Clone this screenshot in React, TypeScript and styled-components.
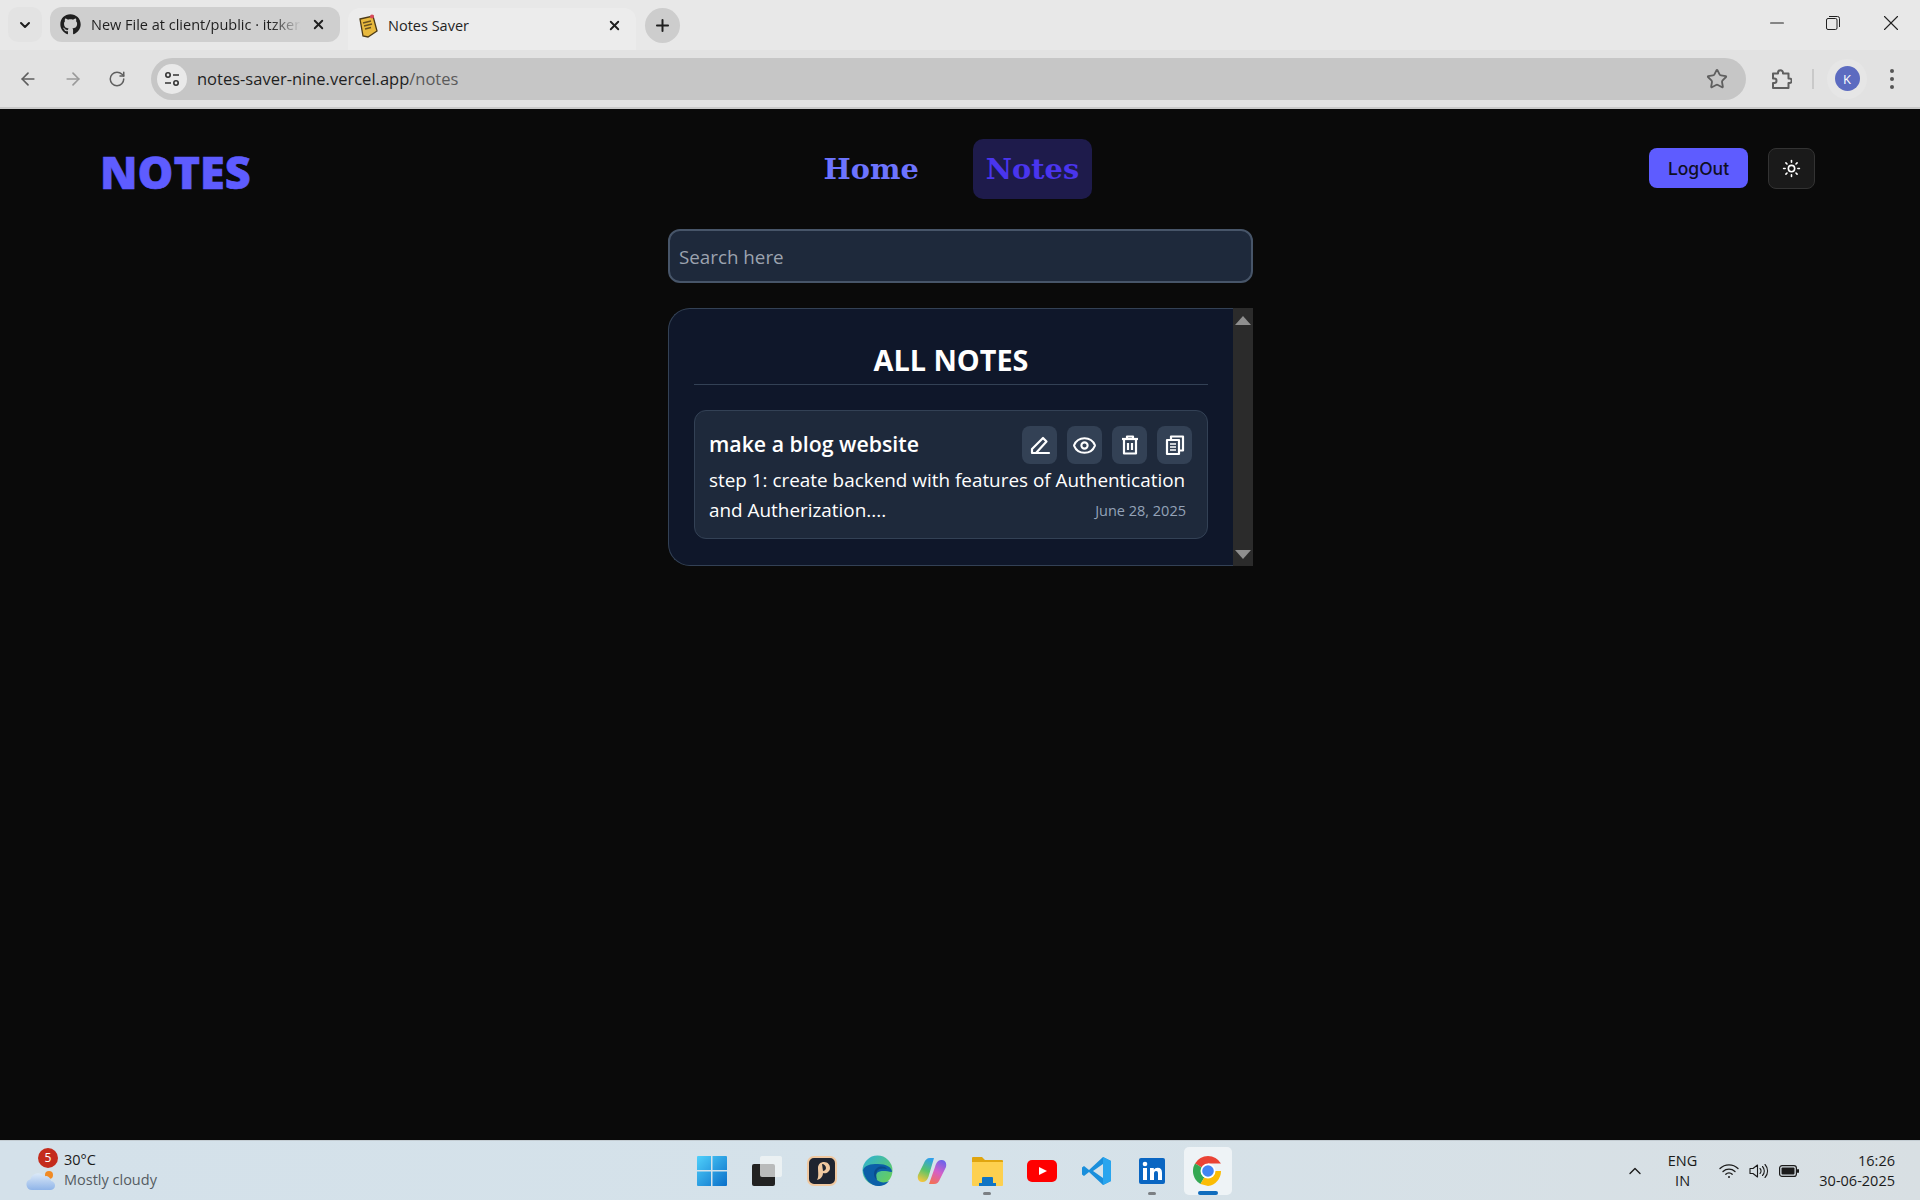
import React from "react";
import styled, { createGlobalStyle } from "styled-components";
import { FaGithub } from "react-icons/fa";
import { ArrowLeft, ArrowRight, ChevronDown, ChevronUp, Eye, Minus, Plus, RotateCw, Star, Sun, X } from "lucide-react";

const GlobalStyle = createGlobalStyle`
  html, body { margin: 0; padding: 0; background: #0a0a0a; }
  * { box-sizing: border-box; }
  body { font-family: "Open Sans", "Noto Sans", sans-serif; }
`;

const Screen = styled.div`
  width: 1920px;
  height: 1200px;
  display: flex;
  flex-direction: column;
  overflow: hidden;
`;

/* browser chrome */
const TabStrip = styled.div`
  height: 50px;
  background: #e8e8e8;
  display: flex;
  align-items: flex-start;
  padding: 7px 0 0 8px;
  color: #1f1f1f;
`;

const ListButton = styled.div`
  width: 34px;
  height: 35px;
  border-radius: 10px;
  background: #e3e3e3;
  display: flex;
  align-items: center;
  justify-content: center;
  margin-right: 8px;
`;

const Tab = styled.div<{ $active?: boolean }>`
  width: ${({ $active }) => ($active ? "288px" : "290px")};
  height: ${({ $active }) => ($active ? "43px" : "35px")};
  margin-top: ${({ $active }) => ($active ? "1px" : "0")};
  margin-right: ${({ $active }) => ($active ? "9px" : "8px")};
  background: ${({ $active }) => ($active ? "#ececec" : "#cfcfcf")};
  border-radius: ${({ $active }) => ($active ? "12px 12px 0 0" : "12px")};
  display: flex;
  align-items: center;
  padding: ${({ $active }) => ($active ? "0 14px 8px 10px" : "0 14px 0 10px")};
  gap: 10px;
`;

const TabTitle = styled.span<{ $fade?: boolean }>`
  flex: 1;
  font-size: 14.5px;
  white-space: nowrap;
  overflow: hidden;
  mask-image: ${({ $fade }) => ($fade ? "linear-gradient(90deg, #000 86%, transparent 100%)" : "none")};
`;

const NewTab = styled.div`
  width: 35px;
  height: 35px;
  border-radius: 50%;
  background: #cdcdcd;
  margin-top: 1px;
  display: flex;
  align-items: center;
  justify-content: center;
`;

const WindowControls = styled.div`
  margin-left: auto;
  display: flex;
  align-items: center;
  height: 32px;
  color: #222;
  padding-right: 16px;
  gap: 38px;
`;

const Toolbar = styled.div`
  height: 59px;
  background: #e2e2e2;
  border-bottom: 2px solid #c9c9c9;
  display: flex;
  align-items: center;
  padding: 0 0 0 18px;
  color: #5f5f5f;
`;

const NavIcons = styled.div`
  display: flex;
  align-items: center;
  gap: 25px;
  margin-right: 25px;
`;

const AddressBar = styled.div`
  width: 1595px;
  height: 42px;
  border-radius: 21px;
  background: #c6c6c6;
  display: flex;
  align-items: center;
  padding: 0 18px 0 6px;
`;

const SiteInfo = styled.div`
  width: 30px;
  height: 30px;
  border-radius: 50%;
  background: #e9e9e9;
  display: flex;
  align-items: center;
  justify-content: center;
  margin-right: 10px;
  color: #333;
`;

const Url = styled.span`
  flex: 1;
  font-size: 16.5px;
  color: #1f1f1f;
`;

const UrlPath = styled.span`
  color: #5a5a5a;
`;

const ToolbarEnd = styled.div`
  flex: 1;
  display: flex;
  align-items: center;
  padding-left: 24px;
`;

const ToolbarDivider = styled.div`
  width: 2px;
  height: 20px;
  background: #c9c9c9;
  margin: 0 13px 0 20px;
`;

const AvatarHalo = styled.div`
  width: 40px;
  height: 40px;
  border-radius: 50%;
  background: #e6e6e6;
  display: flex;
  align-items: center;
  justify-content: center;
  margin-right: 23px;
`;

const Avatar = styled.div`
  width: 25px;
  height: 25px;
  border-radius: 50%;
  background: #5c6bc0;
  color: #fff;
  font-size: 13px;
  display: flex;
  align-items: center;
  justify-content: center;
`;

const Dots = styled.div`
  display: flex;
  flex-direction: column;
  gap: 4px;
`;

const Dot = styled.span`
  width: 4px;
  height: 4px;
  border-radius: 50%;
  background: #555;
`;

/* page */
const Page = styled.main`
  flex: 1;
  background: #0a0a0a;
  padding-top: 30px;
  display: flex;
  flex-direction: column;
`;

const Navbar = styled.header`
  display: flex;
  justify-content: space-between;
  align-items: center;
  height: 60px;
  padding: 0 105px 0 100px;
`;

const Logo = styled.div`
  font-family: "Open Sans", sans-serif;
  font-weight: 800;
  font-size: 45px;
  line-height: 1;
  color: #5e5cff;
  -webkit-text-stroke: 0.6px #5e5cff;
  margin: 5px 3px 0 0;
`;

const NavLinks = styled.nav`
  display: flex;
  gap: 41px;
`;

const NavLink = styled.a<{ $active?: boolean }>`
  font-family: "DejaVu Serif", serif;
  font-weight: 700;
  font-size: 28.8px;
  line-height: 60px;
  height: 60px;
  padding: 0 13px;
  border-radius: 10px;
  color: ${({ $active }) => ($active ? "#4a35ee" : "#6d74ff")};
  background: ${({ $active }) => ($active ? "#1e1b4b" : "transparent")};
`;

const NavActions = styled.div`
  display: flex;
  align-items: center;
  gap: 20px;
  margin-top: -2px;
`;

const LogoutButton = styled.button`
  width: 99px;
  height: 40px;
  border: none;
  border-radius: 8px;
  background: #5e5cff;
  color: #0f0f1f;
  font-family: "Inter", sans-serif;
  font-weight: 500;
  font-size: 17.5px;
`;

const ThemeButton = styled.button`
  width: 47px;
  height: 41px;
  border: 1px solid #333;
  border-radius: 8px;
  background: #1a1a1a;
  color: #fff;
  display: flex;
  align-items: center;
  justify-content: center;
  padding: 0;
`;

const Column = styled.section`
  width: 585px;
  margin: 30px 0 0 668px;
`;

const SearchInput = styled.input`
  width: 100%;
  height: 54px;
  border: 2px solid #475569;
  border-radius: 12px;
  background: #1e293b;
  padding: 1px 9px 0;
  font-family: inherit;
  font-size: 18.8px;
  outline: none;
  color: #fff;
  &::placeholder { color: #9ca3af; opacity: 1; }
`;

const Panel = styled.div`
  margin-top: 25px;
  height: 258px;
  display: flex;
  background: #0f172a;
  border: 1px solid #334155;
  border-right: none;
  border-radius: 22px 0 0 22px;
`;

const PanelBody = styled.div`
  flex: 1;
  padding: 25px 25px 0 25px;
`;

const Heading = styled.h2`
  margin: 0;
  height: 51px;
  border-bottom: 1px solid #334155;
  text-align: center;
  font-size: 28.8px;
  font-weight: 700;
  line-height: 52px;
  color: #fff;
`;

const NoteCard = styled.article`
  margin-top: 25px;
  height: 129px;
  background: #1e293b;
  border: 1px solid #334155;
  border-radius: 12px;
  padding: 15px 15px 0 14px;
`;

const NoteHead = styled.div`
  display: flex;
  justify-content: space-between;
  align-items: center;
  height: 38px;
  margin-bottom: 1px;
`;

const NoteTitle = styled.h3`
  margin: -3px 0 0;
  font-size: 21.3px;
  font-weight: 600;
  color: #fff;
`;

const NoteActions = styled.div`
  display: flex;
  gap: 10px;
`;

const ActionButton = styled.button`
  width: 35px;
  height: 38px;
  border: none;
  border-radius: 8px;
  background: #334155;
  color: #fff;
  display: flex;
  align-items: center;
  justify-content: center;
  padding: 0;
`;

const NoteBody = styled.p`
  margin: 0;
  font-size: 18.9px;
  line-height: 30px;
  color: #fff;
  white-space: nowrap;
`;

const NoteFoot = styled.div`
  display: flex;
  justify-content: space-between;
  align-items: center;
  padding-right: 6px;
`;

const NoteDate = styled.span`
  font-size: 14.5px;
  color: #94a3b8;
`;

const ScrollTrack = styled.div`
  width: 20px;
  margin: -1px 0;
  background: #2b2b2b;
  display: flex;
  flex-direction: column;
  justify-content: space-between;
  align-items: center;
  padding: 8px 0 7px;
`;

const ScrollArrow = styled.div<{ $down?: boolean }>`
  width: 0;
  height: 0;
  border-left: 8px solid transparent;
  border-right: 8px solid transparent;
  border-bottom: ${({ $down }) => ($down ? "0" : "9px solid #8f8f8f")};
  border-top: ${({ $down }) => ($down ? "9px solid #8f8f8f" : "0")};
`;

/* taskbar */
const Taskbar = styled.footer`
  height: 60px;
  background: linear-gradient(90deg, #d4e1ea 0%, #d5e2ea 50%, #d8dfe3 100%);
  border-top: 1px solid #c3ccd2;
  display: grid;
  grid-template-columns: 1fr auto 1fr;
  align-items: center;
  color: #1b1b1b;
`;

const Weather = styled.div`
  display: flex;
  align-items: center;
  padding-left: 25px;
  gap: 9px;
`;

const WeatherIcon = styled.div`
  position: relative;
  width: 30px;
  height: 40px;
  display: flex;
  align-items: flex-end;
`;

const Badge = styled.span`
  position: absolute;
  left: 13px;
  top: -3px;
  width: 20px;
  height: 20px;
  border-radius: 50%;
  background: #c42b1c;
  color: #fff;
  font-size: 12px;
  display: flex;
  align-items: center;
  justify-content: center;
`;

const WeatherText = styled.div`
  font-size: 14.5px;
  line-height: 20px;
  margin-top: -2px;
`;

const MutedLine = styled.div`
  color: #555c62;
`;

const TaskIcons = styled.div`
  display: flex;
  align-items: center;
  margin-left: -4px;
`;

const TaskItem = styled.div<{ $active?: boolean }>`
  position: relative;
  width: ${({ $active }) => ($active ? "48px" : "55px")};
  height: 48px;
  margin-left: ${({ $active }) => ($active ? "4px" : "0")};
  border-radius: 5px;
  background: ${({ $active }) => ($active ? "#eef3f6" : "transparent")};
  display: flex;
  align-items: center;
  justify-content: center;
`;

const RunDot = styled.span<{ $active?: boolean }>`
  position: absolute;
  bottom: 0;
  left: 50%;
  transform: translateX(-50%);
  width: ${({ $active }) => ($active ? "20px" : "8px")};
  height: ${({ $active }) => ($active ? "4px" : "3px")};
  border-radius: 2px;
  background: ${({ $active }) => ($active ? "#0f6cbd" : "#7b7f83")};
`;

const Tray = styled.div`
  display: flex;
  align-items: center;
  justify-content: flex-end;
  padding-right: 25px;
`;

const LangBlock = styled.div`
  font-size: 14.5px;
  line-height: 20px;
  text-align: center;
  margin: 0 22px 0 23px;
`;

const TrayIcons = styled.div`
  display: flex;
  align-items: center;
  gap: 10px;
  margin-right: 20px;
`;

const Clock = styled.div`
  font-size: 14.5px;
  line-height: 20px;
  text-align: right;
`;

const PenIcon = () => (
  <svg width="22" height="22" viewBox="0 0 22 22" fill="none" stroke="currentColor" strokeWidth="2.2" strokeLinejoin="round" strokeLinecap="round">
    <path d="M3 19v-4L14 4l3.500 3.500L7 19z" />
    <path d="M7 19h13" />
  </svg>
);

const TrashIcon = () => (
  <svg width="22" height="22" viewBox="0 0 22 22" fill="none" stroke="currentColor" strokeWidth="2.2" strokeLinejoin="round">
    <path d="M3 5h16" />
    <path d="M8 5V2.500h6V5" />
    <path d="M5 5v14.500h12V5" />
    <path d="M9 9v7M13 9v7" />
  </svg>
);

const CopyNotesIcon = () => (
  <svg width="22" height="22" viewBox="0 0 22 22" fill="none" stroke="currentColor" strokeWidth="2.2" strokeLinejoin="round">
    <path d="M7 6V2.500h12v14h-4" />
    <path d="M3 6h12v14H3z" />
    <path d="M6 10h6M6 13h6M6 16h6" strokeWidth="1.6" />
  </svg>
);

const SiteInfoIcon = () => (
  <svg width="18" height="18" viewBox="0 0 18 18" fill="none" stroke="currentColor" strokeWidth="1.6">
    <circle cx="5" cy="5" r="2.200" />
    <path d="M10 5h6M2 13h6" />
    <circle cx="13" cy="13" r="2.200" />
  </svg>
);

const RestoreIcon = () => (
  <svg width="14" height="14" viewBox="0 0 14 14" fill="none" stroke="currentColor" strokeWidth="1">
    <rect x="0.500" y="2.500" width="10.500" height="11" rx="1.500" />
    <path d="M3 .5h8.500a2 2 0 0 1 2 2V11" />
  </svg>
);

const ExtensionIcon = () => (
  <svg width="22" height="22" viewBox="0 0 22 22" fill="none" stroke="currentColor" strokeWidth="2" strokeLinejoin="round">
    <path d="M3 5.500h5v-.8a2.500 2.500 0 0 1 5 0v.8h5.500v5h1a2.200 2.200 0 0 1 0 4.400h-1V20H3v-5h1.200a2.300 2.300 0 0 0 0-4.600H3z" />
  </svg>
);

const NotesFavicon = () => (
  <svg width="20" height="24" viewBox="0 0 20 24">
    <path d="M2 5l13-3 4 15-9 6-5-1z" fill="#e8b93d" stroke="#4c3a17" strokeWidth="1.300" />
    <path d="M5 9l8-2M6 12l8-2M7 15l6-1.500" stroke="#6b5320" strokeWidth="1.500" />
    <circle cx="14" cy="2.500" r="2" fill="#d84a5b" />
  </svg>
);

const CloudIcon = () => (
  <svg width="30" height="22" viewBox="0 0 30 22">
    <defs>
      <linearGradient id="cloudFill" x1="0" y1="0" x2="0" y2="1">
        <stop offset="0" stopColor="#dbe9f8" />
        <stop offset="1" stopColor="#8fb4e8" />
      </linearGradient>
    </defs>
    <circle cx="24" cy="6" r="4" fill="#f08a24" />
    <path d="M7 21a5.500 5.500 0 0 1-1.500-10.800A7.500 7.500 0 0 1 19 7.500 5 5 0 0 1 26 12a4.500 4.500 0 0 1-1 9z" fill="url(#cloudFill)" />
  </svg>
);

const StartIcon = () => (
  <svg width="30" height="30" viewBox="0 0 30 30">
    <defs>
      <linearGradient id="startFill" x1="0" y1="0" x2="1" y2="1">
        <stop offset="0" stopColor="#4fd0fb" />
        <stop offset="1" stopColor="#0a6fc9" />
      </linearGradient>
    </defs>
    <path d="M0 1a1 1 0 0 1 1-1h13v14H0zM15.500 0H29a1 1 0 0 1 1 1v13H15.500zM0 15.500h14V30H1a1 1 0 0 1-1-1zM15.500 15.500H30V29a1 1 0 0 1-1 1H15.500z" fill="url(#startFill)" />
  </svg>
);

const TaskViewIcon = () => (
  <svg width="30" height="30" viewBox="0 0 30 30">
    <rect x="0" y="8" width="23" height="22" rx="2" fill="#222" />
    <rect x="8" y="0" width="22" height="21" rx="2" fill="#f4f6f7" fillOpacity="0.72" />
  </svg>
);

const NotesAppIcon = () => (
  <svg width="30" height="30" viewBox="0 0 30 30">
    <rect x="1" y="1" width="28" height="28" rx="6" fill="#1f2430" stroke="#f0c8a0" strokeWidth="2" />
    <path d="M10 24c2-3 1-8 1-12 0-4 3-6 6-6 4 0 6 3 6 6 0 4-4 6-7 5 0 3-2 6-6 7z" fill="#f0c8a0" />
    <path d="M15 8c2 0 4 2 4 4s-2 3-3 3z" fill="#1f2430" />
  </svg>
);

const EdgeIcon = () => (
  <svg width="31" height="31" viewBox="0 0 31 31">
    <defs>
      <linearGradient id="edgeTop" x1="0" y1="0" x2="1" y2="1">
        <stop offset="0" stopColor="#2bb0d8" />
        <stop offset="1" stopColor="#6fd24c" />
      </linearGradient>
    </defs>
    <circle cx="15.500" cy="15.500" r="15" fill="url(#edgeTop)" />
    <path d="M1 15C2 24 9 31 16 31c5 0 9-2 11-5-3 2-9 2-12-1-2-2-2-5 0-7 3-3 9-2 15-1C30 12 24 9 16 9 8 9 3 10 1 15z" fill="#0c5fa8" />
    <path d="M15 25c-4-3-4-9 0-12 3-2 8-2 10 1-4-1-8-1-10 2-1 2-1 6 0 9z" fill="#0a4b8c" />
  </svg>
);

const CopilotIcon = () => (
  <svg width="30" height="30" viewBox="0 0 30 30">
    <defs>
      <linearGradient id="copilotA" x1="0.600" y1="0" x2="0.300" y2="1">
        <stop offset="0" stopColor="#2f9fe8" />
        <stop offset="0.500" stopColor="#58c46a" />
        <stop offset="1" stopColor="#f6c53c" />
      </linearGradient>
      <linearGradient id="copilotB" x1="0.700" y1="0" x2="0.300" y2="1">
        <stop offset="0" stopColor="#6d63ea" />
        <stop offset="0.500" stopColor="#d45fc8" />
        <stop offset="1" stopColor="#f2705a" />
      </linearGradient>
    </defs>
    <path d="M7 7c1-3 3-5 6-5h4l-5 17c-1 4-3 7-6 7H5c-3 0-5-3-4-7z" fill="url(#copilotA)" />
    <path d="M23 23c-1 3-3 5-6 5h-5l6-17c1-4 3-7 6-7h1c3 0 5 3 4 7z" fill="url(#copilotB)" />
  </svg>
);

const FolderIcon = () => (
  <svg width="31" height="30" viewBox="0 0 31 30">
    <path d="M0 2a1 1 0 0 1 1-1h9l3 3h17a1 1 0 0 1 1 1v5H0z" fill="#e0a50f" />
    <path d="M0 6h31v23a1 1 0 0 1-1 1H1a1 1 0 0 1-1-1z" fill="#fdd04f" />
    <rect x="10" y="21" width="11" height="8" rx="1" fill="#0f74c4" />
    <rect x="7" y="27" width="17" height="3" fill="#0f74c4" />
  </svg>
);

const YoutubeIcon = () => (
  <svg width="30" height="22" viewBox="0 0 30 22">
    <rect width="30" height="22" rx="5" fill="#f00" />
    <path d="M12 7l8 4-8 4z" fill="#fff" />
  </svg>
);

const VscodeIcon = () => (
  <svg width="30" height="30" viewBox="0 0 30 30">
    <path d="M21 1l8 4v20l-8 4L7 16 2 20l-2-1.500V11.500L2 10l5 4z" fill="#1a8fdc" />
    <path d="M21 8L11 15l10 7z" fill="#d5e2ea" />
    <path d="M21 1l8 4v20l-8 4z" fill="#29a5ee" />
  </svg>
);

const LinkedinIcon = () => (
  <svg width="26" height="26" viewBox="0 0 26 26">
    <rect width="26" height="26" rx="2" fill="#0a66c2" />
    <rect x="4" y="10" width="4" height="12" fill="#fff" />
    <circle cx="6" cy="6" r="2.300" fill="#fff" />
    <path d="M11 10h3.800v1.800c.8-1.300 2-2.100 3.800-2.100 3 0 4.400 1.800 4.400 5V22h-4v-6.500c0-1.700-.6-2.500-1.900-2.500-1.400 0-2.100 1-2.100 2.500V22h-4z" fill="#fff" />
  </svg>
);

const ChromeIcon = () => (
  <svg width="30" height="30" viewBox="0 0 30 30">
    <path d="M15 15L2.010 7.500A15 15 0 0 1 27.990 7.500H15z" fill="#ea4335" />
    <path d="M15 15l-7.500 13A15 15 0 0 1 2.010 7.500z" fill="#34a853" />
    <path d="M15 15h12.990A15 15 0 0 1 15 30l-7.500-2z" fill="#fbbc04" />
    <circle cx="15" cy="15" r="7.500" fill="#fff" />
    <circle cx="15" cy="15" r="5.800" fill="#4285f4" />
  </svg>
);

const WifiIcon = () => (
  <svg width="20" height="16" viewBox="0 0 20 16" fill="none" stroke="#1b1b1b" strokeWidth="1.300" strokeLinecap="round">
    <path d="M1 5.500a13 13 0 0 1 18 0" />
    <path d="M4 8.500a9 9 0 0 1 12 0" />
    <path d="M6.800 11.300a4.500 4.500 0 0 1 6.400 0" />
    <circle cx="10" cy="14" r="1" fill="#1b1b1b" stroke="none" />
  </svg>
);

const SpeakerIcon = () => (
  <svg width="20" height="18" viewBox="0 0 20 18" fill="none" stroke="#1b1b1b" strokeWidth="1.100" strokeLinejoin="round" strokeLinecap="round">
    <path d="M1 6.500h3L8.500 3v12L4 11.500H1z" />
    <path d="M11 6.500a3.500 3.500 0 0 1 0 5" />
    <path d="M13.500 4.500a6.500 6.500 0 0 1 0 9" />
    <path d="M16 2.500a9.500 9.500 0 0 1 0 13" />
  </svg>
);

const BatteryIcon = () => (
  <svg width="20" height="12" viewBox="0 0 20 12">
    <rect x="0.600" y="0.600" width="16.800" height="10.800" rx="2.500" fill="none" stroke="#1b1b1b" strokeWidth="1.200" />
    <rect x="2.500" y="2.500" width="13" height="7" rx="1" fill="#1b1b1b" />
    <rect x="18" y="4" width="2" height="4" rx="1" fill="#1b1b1b" />
  </svg>
);

const taskItems = [
  { id: "start", icon: <StartIcon /> },
  { id: "taskview", icon: <TaskViewIcon /> },
  { id: "notes", icon: <NotesAppIcon /> },
  { id: "edge", icon: <EdgeIcon /> },
  { id: "copilot", icon: <CopilotIcon /> },
  { id: "folder", icon: <FolderIcon />, running: true },
  { id: "youtube", icon: <YoutubeIcon /> },
  { id: "vscode", icon: <VscodeIcon /> },
  { id: "linkedin", icon: <LinkedinIcon />, running: true },
];

export default function App() {
  return (
    <Screen>
      <GlobalStyle />
      <TabStrip>
        <ListButton>
          <ChevronDown size={16} strokeWidth={3} />
        </ListButton>
        <Tab>
          <FaGithub size={21} />
          <TabTitle $fade>New File at client/public · itzkeran/notes</TabTitle>
          <X size={15} strokeWidth={3} />
        </Tab>
        <Tab $active>
          <NotesFavicon />
          <TabTitle>Notes Saver</TabTitle>
          <X size={15} strokeWidth={3} />
        </Tab>
        <NewTab>
          <Plus size={19} strokeWidth={2.5} />
        </NewTab>
        <WindowControls>
          <Minus size={22} strokeWidth={1.2} />
          <RestoreIcon />
          <X size={26} strokeWidth={1} />
        </WindowControls>
      </TabStrip>
      <Toolbar>
        <NavIcons>
          <ArrowLeft size={20} strokeWidth={2} />
          <ArrowRight size={20} strokeWidth={2} color="#9a9a9a" />
          <RotateCw size={18} strokeWidth={2} />
        </NavIcons>
        <AddressBar>
          <SiteInfo>
            <SiteInfoIcon />
          </SiteInfo>
          <Url>
            notes-saver-nine.vercel.app<UrlPath>/notes</UrlPath>
          </Url>
          <Star size={22} strokeWidth={2} />
        </AddressBar>
        <ToolbarEnd>
          <ExtensionIcon />
          <ToolbarDivider />
          <AvatarHalo>
            <Avatar>K</Avatar>
          </AvatarHalo>
          <Dots>
            <Dot />
            <Dot />
            <Dot />
          </Dots>
        </ToolbarEnd>
      </Toolbar>

      <Page>
        <Navbar>
          <Logo>NOTES</Logo>
          <NavLinks>
            <NavLink>Home</NavLink>
            <NavLink $active>Notes</NavLink>
          </NavLinks>
          <NavActions>
            <LogoutButton>LogOut</LogoutButton>
            <ThemeButton>
              <Sun size={19} strokeWidth={2} />
            </ThemeButton>
          </NavActions>
        </Navbar>
        <Column>
          <SearchInput placeholder="Search here" readOnly />
          <Panel>
            <PanelBody>
              <Heading>ALL NOTES</Heading>
              <NoteCard>
                <NoteHead>
                  <NoteTitle>make a blog website</NoteTitle>
                  <NoteActions>
                    <ActionButton>
                      <PenIcon />
                    </ActionButton>
                    <ActionButton>
                      <Eye size={25} strokeWidth={2} />
                    </ActionButton>
                    <ActionButton>
                      <TrashIcon />
                    </ActionButton>
                    <ActionButton>
                      <CopyNotesIcon />
                    </ActionButton>
                  </NoteActions>
                </NoteHead>
                <NoteBody>step 1: create backend with features of Authentication</NoteBody>
                <NoteFoot>
                  <NoteBody>and Autherization....</NoteBody>
                  <NoteDate>June 28, 2025</NoteDate>
                </NoteFoot>
              </NoteCard>
            </PanelBody>
            <ScrollTrack>
              <ScrollArrow />
              <ScrollArrow $down />
            </ScrollTrack>
          </Panel>
        </Column>
      </Page>

      <Taskbar>
        <Weather>
          <WeatherIcon>
            <CloudIcon />
            <Badge>5</Badge>
          </WeatherIcon>
          <WeatherText>
            <div>30°C</div>
            <MutedLine>Mostly cloudy</MutedLine>
          </WeatherText>
        </Weather>
        <TaskIcons>
          {taskItems.map((item) => (
            <TaskItem key={item.id}>
              {item.icon}
              {item.running && <RunDot />}
            </TaskItem>
          ))}
          <TaskItem $active>
            <ChromeIcon />
            <RunDot $active />
          </TaskItem>
        </TaskIcons>
        <Tray>
          <ChevronUp size={20} strokeWidth={1.6} />
          <LangBlock>
            ENG
            <br />
            IN
          </LangBlock>
          <TrayIcons>
            <WifiIcon />
            <SpeakerIcon />
            <BatteryIcon />
          </TrayIcons>
          <Clock>
            16:26
            <br />
            30-06-2025
          </Clock>
        </Tray>
      </Taskbar>
    </Screen>
  );
}
